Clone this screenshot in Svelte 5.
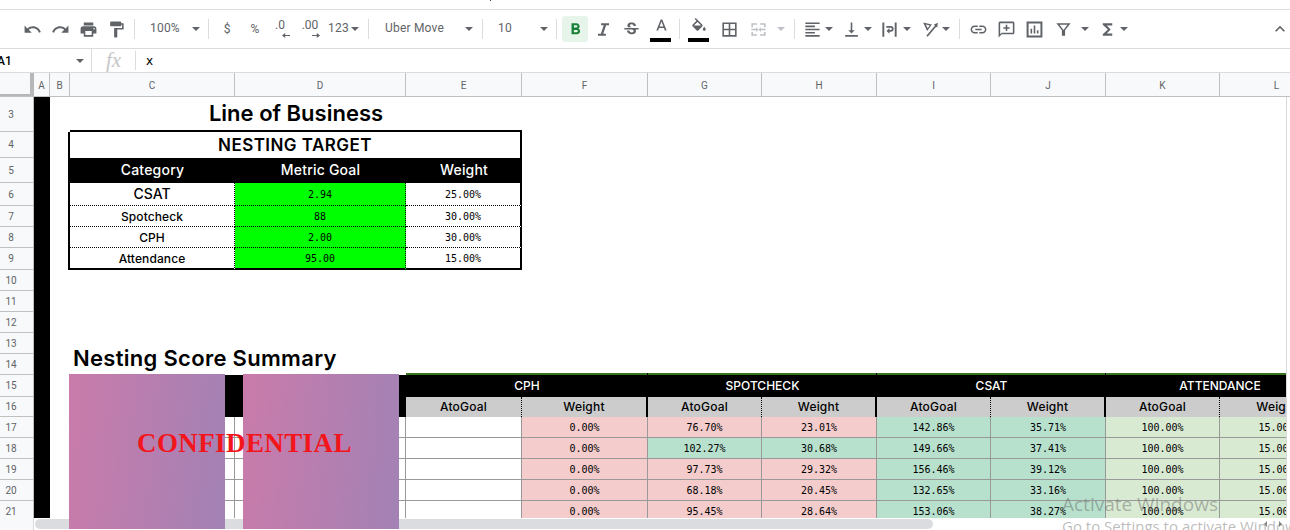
<script>
  const P = {
    undo: 'M12.5 8c-2.65 0-5.05.99-6.9 2.6L2 7v9h9l-3.62-3.62c1.39-1.16 3.16-1.88 5.12-1.88 3.54 0 6.55 2.31 7.6 5.5l2.37-.78C21.08 11.03 17.15 8 12.5 8z',
    redo: 'M18.4 10.6C16.55 8.99 14.15 8 11.5 8c-4.65 0-8.58 3.03-9.96 7.22L3.9 16c1.05-3.19 4.05-5.5 7.6-5.5 1.95 0 3.73.72 5.12 1.88L13 16h9V7l-3.6 3.6z',
    print: 'M19 8H5c-1.66 0-3 1.34-3 3v6h4v4h12v-4h4v-6c0-1.66-1.34-3-3-3zm-3 11H8v-5h8v5zm3-7c-.55 0-1-.45-1-1s.45-1 1-1 1 .45 1 1-.45 1-1 1zm-1-9H6v4h12V3z',
    paint: 'M18 4V3c0-.55-.45-1-1-1H5c-.55 0-1 .45-1 1v4c0 .55.45 1 1 1h12c.55 0 1-.45 1-1V6h1v4H9v11c0 .55.45 1 1 1h2c.55 0 1-.45 1-1v-9h8V4h-3z',
    bold: 'M15.6 10.79c.97-.67 1.65-1.77 1.65-2.79 0-2.26-1.75-4-4-4H7v14h7.04c2.09 0 3.71-1.7 3.71-3.79 0-1.52-.86-2.82-2.15-3.42zM10 6.5h3c.83 0 1.5.67 1.5 1.5s-.67 1.5-1.5 1.5h-3v-3zm3.5 9H10v-3h3.5c.83 0 1.5.67 1.5 1.5s-.67 1.5-1.5 1.5z',
    italic: 'M9 4v2.600h3.300L8.700 17.400H5V20h10v-2.600h-3.300l3.600-10.800H19V4z',
    strike: 'M7.240 8.750c-.26-.48-.39-1.030-.39-1.670 0-.61.13-1.160.4-1.670.26-.5.63-.93 1.110-1.290.48-.35 1.050-.63 1.700-.83.66-.19 1.390-.29 2.180-.29.81 0 1.540.11 2.210.34.66.22 1.230.54 1.690.94.47.4.83.88 1.080 1.430.25.55.38 1.150.38 1.810h-3.010c0-.31-.05-.59-.15-.85-.09-.27-.24-.49-.44-.68-.2-.19-.45-.33-.75-.44-.3-.1-.66-.16-1.060-.16-.39 0-.74.04-1.030.13-.29.09-.53.21-.72.36-.19.16-.34.34-.44.55-.1.21-.15.43-.15.66 0 .48.25.88.74 1.210.38.25.77.48 1.410.7H7.390c-.05-.08-.11-.17-.15-.25zM21 12v-2H3v2h9.620c.18.07.4.14.55.2.37.17.66.34.87.51.21.17.35.36.43.57.07.2.11.43.11.69 0 .23-.05.45-.14.66-.09.2-.23.38-.42.53-.19.15-.42.26-.71.35-.29.08-.63.13-1.010.13-.43 0-.83-.04-1.180-.13s-.66-.23-.91-.42c-.25-.19-.45-.44-.59-.75-.14-.31-.25-.76-.25-1.210H6.400c0 .55.08 1.130.24 1.580.16.45.37.85.65 1.210.28.35.6.66.98.92.37.26.78.48 1.220.65.44.17.9.3 1.380.39.48.08.96.13 1.440.13.8 0 1.530-.09 2.180-.28s1.210-.45 1.670-.79c.46-.34.82-.77 1.070-1.270s.38-1.070.38-1.710c0-.6-.1-1.140-.31-1.610-.05-.11-.11-.23-.17-.33H21z',
    grid: 'M3 3v18h18V3H3zm8 16H5v-6h6v6zm0-8H5V5h6v6zm8 8h-6v-6h6v6zm0-8h-6V5h6v6z',
    merge: 'M3 4h7v2H5v3H3V4zm11 0h7v5h-2V6h-5V4zM3 15h2v3h5v2H3v-5zm16 0h2v5h-7v-2h5v-3zM3 11h6V9l3 3-3 3v-2H3v-2zm18 0v2h-6v2l-3-3 3-3v2h6z',
    align: 'M15 15H3v2h12v-2zm0-8H3v2h12V7zM3 13h18v-2H3v2zm0 8h18v-2H3v2zM3 3v2h18V3H3z',
    valign: 'M16 13h-3V3h-2v10H8l4 4 4-4zM4 19v2h16v-2H4z',
    wrap: 'M3 3h2.400v18H3V3zm15.600 0H21v18h-2.400V3zM8 7.500h5.500a3.700 3.700 0 0 1 0 7.400H12v2.600l-3.800-3.700 3.800-3.700v2.600h1.500a1.400 1.400 0 0 0 0-2.900H8V7.500z',
    rotate: 'M4 3l11 2.600-6 8.400L4 3zm3.400 2.800l2.200 4.700 2.700-3.700-4.900-1zM8 20l11-13-1.800-1.100 5.300-2.400-.7 6-1.400-1L9.700 21.200 8 20z',
    link: 'M3.900 12c0-1.710 1.390-3.100 3.100-3.100h4V7H7c-2.760 0-5 2.240-5 5s2.240 5 5 5h4v-1.900H7c-1.710 0-3.100-1.390-3.100-3.100zM8 13h8v-2H8v2zm9-6h-4v1.900h4c1.710 0 3.100 1.390 3.100 3.100s-1.390 3.100-3.100 3.100h-4V17h4c2.760 0 5-2.240 5-5s-2.240-5-5-5z',
    comment: 'M20 2H4c-1.100 0-2 .9-2 2v18l4-4h14c1.100 0 2-.9 2-2V4c0-1.100-.9-2-2-2zm0 14H6l-2 2V4h16v12zM11 6h2v3h3v2h-3v3h-2v-3H8V9h3V6z',
    chart: 'M2 2h20v20H2V2zm2.500 2.500v15h15v-15h-15zM7 11h2v6H7v-6zm4-4h2v10h-2V7zm4 6h2v4h-2v-4z',
    filter: 'M3 4h18l-7 9v7h-4v-7L3 4zm4 2l5 6.500L17 6H7z',
    sigma: 'M18 4H6v2l6.500 6L6 18v2h12v-3h-7l5-5-5-5h7z',
    up: 'M7.410 15.410L12 10.830l4.590 4.580L18 14l-6-6-6 6z'
  };

  const tools = [
    { k: 'i', n: 'undo', w: 28 }, { k: 'i', n: 'redo', w: 28 }, { k: 'i', n: 'print', w: 28 }, { k: 'i', n: 'paint', w: 28 },
    { k: 's', ml: 4 },
    { k: 'pick', t: '100%', w: 73, pl: 15, pr: 8 },
    { k: 's' },
    { k: 't', t: '$', w: 36 }, { k: 't', t: '%', w: 20 },
    { k: 'dec', t: '.0', w: 30 }, { k: 'dec', t: '.00', w: 30, right: true },
    { k: 'pick', t: '123', w: 43, pl: 3, pr: 9 },
    { k: 's' },
    { k: 'pick', t: 'Uber Move', w: 113, pl: 16, pr: 9 },
    { k: 's' },
    { k: 'pick', t: '10', w: 73, pl: 15, pr: 8 },
    { k: 's' },
    { k: 'i', n: 'bold', w: 26, ml: 5, on: true },
    { k: 'i', n: 'italic', w: 30 }, { k: 'i', n: 'strike', w: 26 },
    { k: 'color', w: 34, letter: true },
    { k: 's', ml: 1 },
    { k: 'color', w: 38 },
    { k: 'i', n: 'grid', w: 22 },
    { k: 'i', n: 'merge', w: 36, off: true },
    { k: 'a', ml: 1, off: true },
    { k: 's', ml: 9 },
    { k: 'i', n: 'align', w: 26, ml: 4 }, { k: 'a' },
    { k: 'i', n: 'valign', w: 26, ml: 5 }, { k: 'a' },
    { k: 'i', n: 'wrap', w: 28, ml: 3 }, { k: 'a' },
    { k: 'i', n: 'rotate', w: 26, ml: 5 }, { k: 'a' },
    { k: 's', ml: 9 },
    { k: 'i', n: 'link', w: 36 }, { k: 'i', n: 'comment', w: 20 }, { k: 'i', n: 'chart', w: 36 }, { k: 'i', n: 'filter', w: 22 },
    { k: 'a', ml: 7 },
    { k: 'i', n: 'sigma', w: 26, ml: 5 }, { k: 'a' }
  ];

  const colLabels = 'ABCDEFGHIJKL'.split('');

  const n = (t, c = '', span = 1) => ({ t, c, span });
  const lead = (b = '') => [n('', 'blackcol'), n('', b)];
  const empty = () => [...lead(), n('', '', 10)];

  const target = [
    ['CSAT', '2.94', '25.00%', 'big'],
    ['Spotcheck', '88', '30.00%', ''],
    ['CPH', '2.00', '30.00%', ''],
    ['Attendance', '95.00', '15.00%', 'last']
  ];

  const rowsTarget = target.map(([a, b, c, m]) => [
    ...lead('edge'),
    n(a, `sans dotr ${m === 'big' ? 'big' : 'small'} ${m === 'last' ? 'btm' : 'dots'}`),
    n(b, `mono green ${m === 'last' ? 'btm' : 'dots'}`),
    n(c, `mono endcol ${m === 'last' ? 'btm' : 'dots'}`),
    n('', '', 7)
  ]);

  const P_ = 'pink', G_ = 'mint', L_ = 'pale';
  const score = [
    [[P_, '0.00%'], [P_, '76.70%'], [P_, '23.01%'], [G_, '142.86%'], [G_, '35.71%']],
    [[P_, '0.00%'], [G_, '102.27%'], [G_, '30.68%'], [G_, '149.66%'], [G_, '37.41%']],
    [[P_, '0.00%'], [P_, '97.73%'], [P_, '29.32%'], [G_, '156.46%'], [G_, '39.12%']],
    [[P_, '0.00%'], [P_, '68.18%'], [P_, '20.45%'], [G_, '132.65%'], [G_, '33.16%']],
    [[P_, '0.00%'], [P_, '95.45%'], [P_, '28.64%'], [G_, '153.06%'], [G_, '38.27%']]
  ];
  const rowsScore = score.map((r) => [
    ...lead(),
    n('', 'line'), n('', 'line'), n('', 'line'),
    ...r.map(([c, t]) => n(t, `mono line ${c}`)),
    n('100.00%', `mono line ${L_}`), n('15.00%', `mono line ${L_}`)
  ]);

  const sub = [];
  for (let i = 0; i < 4; i++) {
    sub.push(n('AtoGoal', 'sans sub dotr'));
    sub.push(n('Weight', `sans sub ${i < 3 ? 'thickr' : ''}`));
  }

  const sheet = [
    { h: 35, num: 3, cells: [...lead(), n('Line of Business', 'sans title btmk', 3), n('', '', 7)] },
    { h: 26, num: 4, cells: [...lead('edge'), n('NESTING TARGET', 'sans head endcol', 3), n('', '', 7)] },
    { h: 25, num: 5, cells: [...lead('edge'), n('Category', 'sans colh'), n('Metric Goal', 'sans colh'), n('Weight', 'sans colh'), n('', '', 7)] },
    { h: 23, num: 6, cells: rowsTarget[0] },
    { h: 21, num: 7, cells: rowsTarget[1] },
    { h: 21, num: 8, cells: rowsTarget[2] },
    { h: 22, num: 9, cells: rowsTarget[3] },
    { h: 21, num: 10, cells: empty() },
    { h: 21, num: 11, cells: empty() },
    { h: 21, num: 12, cells: empty() },
    { h: 21, num: 13, cells: empty() },
    { h: 21, num: 14, cells: [...lead(), n('Nesting Score Summary', 'sans summary', 2), n('', 'gline', 2), n('', 'gline', 2), n('', 'gline', 2), n('', 'gline', 2)] },
    { h: 22, num: 15, cells: [...lead('edgethin'), n('', 'inkfill', 2), n('CPH', 'sans band', 2), n('SPOTCHECK', 'sans band', 2), n('CSAT', 'sans band', 2), n('ATTENDANCE', 'sans band', 2)] },
    { h: 20, num: 16, cells: [...lead('edgethin'), n('', 'inkfill', 2), ...sub] },
    { h: 21, num: 17, cells: rowsScore[0] },
    { h: 21, num: 18, cells: rowsScore[1] },
    { h: 21, num: 19, cells: rowsScore[2] },
    { h: 21, num: 20, cells: rowsScore[3] },
    { h: 21, num: 21, cells: rowsScore[4] }
  ];
  const rowTemplate = sheet.map((r) => r.h + 'px').join(' ');
</script>

<div class="app">
  <div class="topline"><span class="tick"></span></div>

  <div class="toolbar">
    {#each tools as b}
      {#if b.k === 's'}
        <span class="sep" style:margin-left={b.ml ? b.ml + 'px' : null}></span>
      {:else if b.k === 'a'}
        <span class="arrow" class:off={b.off} style:margin-left={b.ml ? b.ml + 'px' : null}></span>
      {:else if b.k === 'i'}
        <span class="tool" class:on={b.on} class:off={b.off} style:width={b.w + 'px'} style:margin-left={b.ml ? b.ml + 'px' : null}>
          <svg viewBox="0 0 24 24" width="19" height="19"><path d={P[b.n]} /></svg>
        </span>
      {:else if b.k === 't'}
        <span class="tool txt" style:width={b.w + 'px'}>{b.t}</span>
      {:else if b.k === 'dec'}
        <span class="tool dec" style:width={b.w + 'px'}>
          <span>{b.t}</span>
          <svg viewBox="0 0 10 6" width="8" height="5">
            {#if b.right}<path d="M0 2.300h6V0l4 3-4 3V3.700H0z" />{:else}<path d="M10 2.300H4V0L0 3l4 3V3.700h6z" />{/if}
          </svg>
        </span>
      {:else if b.k === 'pick'}
        <span class="pick" style:width={b.w + 'px'} style:padding-left={b.pl + 'px'} style:padding-right={b.pr + 'px'}>
          <span>{b.t}</span><span class="arrow"></span>
        </span>
      {:else if b.k === 'color'}
        <span class="tool swatch" style:width={b.w + 'px'}>
          {#if b.letter}
            <svg viewBox="0 0 24 24" width="19" height="19"><path d="M11 3L5.500 17h2.250l1.120-3h6.250l1.120 3h2.250L13 3h-2zm-1.380 9L12 5.670 14.380 12H9.620z" /></svg>
          {:else}
            <svg viewBox="0 0 24 24" width="18" height="18"><path d="M16.560 8.940L7.620 0 6.210 1.410l2.380 2.380-5.150 5.150c-.59.59-.59 1.540 0 2.120l5.500 5.500c.29.29.68.44 1.060.44s.77-.15 1.060-.44l5.500-5.500c.59-.58.59-1.530 0-2.120zM5.210 10L10 5.210 14.790 10H5.210zM19 11.500s-2 2.170-2 3.500c0 1.100.9 2 2 2s2-.9 2-2c0-1.330-2-3.500-2-3.500z" /></svg>
          {/if}
          <i></i>
        </span>
      {/if}
    {/each}
    <span class="tool collapse"><svg viewBox="0 0 24 24" width="22" height="22"><path d={P.up} /></svg></span>
  </div>

  <div class="formula">
    <div class="namebox"><span>A1</span><span class="arrow"></span></div>
    <div class="fx">fx</div>
    <div class="value">x</div>
  </div>

  <div class="colhead">
    <div class="corner"></div>
    {#each colLabels as c}<div class="ch">{c}</div>{/each}
  </div>

  <div class="body">
    <div class="grid" style:grid-template-rows={rowTemplate}>
      {#each sheet as row}
        <div class="rn">{row.num}</div>
        {#each row.cells as cell}
          <div class="cell {cell.c}" class:s2={cell.span === 2} class:s3={cell.span === 3} class:s7={cell.span === 7} class:s10={cell.span === 10}>{cell.t}</div>
        {/each}
      {/each}
    </div>
  </div>

  <div class="scroll">
    <div class="scrollcorner"></div>
    <div class="thumb"></div>
    <div class="sarrows"><span class="al"></span><span class="ar"></span></div>
  </div>

  <div class="mask m1"></div>
  <div class="mask m2"></div>
  <div class="conf">CONFIDENTIAL</div>
  <div class="wm"><div>Activate Windows</div><div class="wm2">Go to Settings to activate Windows.</div></div>
</div>

<style>
  :global(body) { margin: 0; background: #fff; }
  .app {
    position: relative;
    width: 1290px;
    height: 530px;
    overflow: hidden;
    background: #fff;
    font-family: Roboto, "Liberation Sans", sans-serif;
    color: #000;
  }
  .topline { height: 9px; border-bottom: 1px solid #dadce0; display: flex; }
  .tick { width: 1px; height: 1px; margin-left: 490px; background: #444; }

  .toolbar {
    height: 38px;
    border-bottom: 1px solid #dadce0;
    display: flex;
    align-items: center;
    padding-left: 18px;
    color: #5f6368;
    fill: #5f6368;
    font-size: 12px;
  }
  .sep { width: 1px; height: 20px; background: #dadce0; flex: none; }
  .tool { display: flex; align-items: center; justify-content: center; height: 26px; flex: none; }
  .tool.on { background: #e6f4ea; border-radius: 3px; fill: #188038; }
  .tool.off { fill: #bdc1c6; }
  .tool.txt { font-size: 12px; }
  .tool.dec { flex-direction: column; font-size: 12px; line-height: 11px; }
  .tool.dec svg { margin: 2px 0 0 12px; }
  .tool.swatch { position: relative; }
  .tool.swatch svg { margin-top: -5px; }
  .tool.swatch i { position: absolute; left: 50%; margin-left: -11px; bottom: 0; width: 21px; height: 4px; background: #000; }
  .collapse { margin-left: auto; width: 20px; }
  .pick { display: flex; align-items: center; justify-content: space-between; flex: none; box-sizing: border-box; height: 26px; padding-bottom: 3px; letter-spacing: .2px; }
  .pick .arrow { margin-top: 3px; }
  .arrow { width: 0; height: 0; flex: none; border-left: 4px solid transparent; border-right: 4px solid transparent; border-top: 4px solid #5f6368; }
  .arrow.off { border-top-color: #bdc1c6; }

  .formula { height: 23px; border-bottom: 1px solid #dadce0; display: flex; align-items: center; font-size: 12px; }
  .namebox { width: 95px; height: 23px; margin-left: -3px; padding-right: 7px; box-sizing: border-box; display: flex; align-items: center; justify-content: space-between; border-right: 1px solid #dadce0; font-weight: 500; flex: none; }
  .fx { width: 44px; height: 19px; text-align: center; border-right: 1px solid #dadce0; font: italic 21px/19px "Liberation Serif", serif; color: #c4c7c5; flex: none; box-sizing: border-box; }
  .value { padding-left: 10px; font-family: "DejaVu Sans", sans-serif; }

  .colhead {
    display: grid;
    grid-template-columns: 34px 16px 20px 165px 171px 116px 126px 114px 115px 114px 115px 114px 114px;
    height: 23px;
    border-bottom: 1px solid #c0c0c0;
    background: #f8f9fa;
    font-size: 10px;
    color: #5f6368;
    width: 1290px;
    overflow: hidden;
  }
  .corner { background: #f8f9fa; border-right: 4px solid #b7b7b7; border-bottom: 3px solid #b7b7b7; box-sizing: border-box; height: 24px; width: 34px; }
  .ch { border-right: 1px solid #c0c0c0; display: flex; align-items: center; justify-content: center; box-sizing: border-box; }

  .body { height: 421px; overflow: hidden; width: 1286px; border-right: 1px solid #d9d9d9; }
  .grid {
    display: grid;
    grid-template-columns: 34px 16px 20px 165px 171px 116px 126px 114px 115px 114px 115px 114px 114px;
    width: 1334px;
  }
  .rn {
    background: #f8f9fa;
    border-bottom: 1px solid #c0c0c0;
    border-right: 1px solid #c0c0c0;
    box-sizing: border-box;
    color: #5f6368;
    font-size: 10px;
    display: flex;
    align-items: center;
    justify-content: center;
    padding-right: 11px;
  }
  .cell { box-sizing: border-box; min-width: 0; display: flex; align-items: center; justify-content: center; white-space: nowrap; overflow: visible; }
  .s2 { grid-column: span 2; }
  .s3 { grid-column: span 3; }
  .s7 { grid-column: span 7; }
  .s10 { grid-column: span 10; }

  .sans { font-family: Inter, Roboto, sans-serif; font-weight: 500; }
  .mono { font-family: "DejaVu Sans Mono", monospace; font-size: 10px; padding-top: 1px; }

  .blackcol { background: #000; }
  .edge { border-right: 2px solid #000; }
  .edgethin { border-right: 1px solid #000; }
  .title { font-size: 22px; font-weight: 600; padding-bottom: 2px; }
  .btmk { border-bottom: 2px solid #000; }
  .head { font-size: 17px; font-weight: 600; letter-spacing: .45px; }
  .endcol { border-right: 2px solid #000; }
  .colh { background: #000; color: #fff; font-size: 14px; letter-spacing: .2px; padding-bottom: 2px; }
  .big { font-size: 14px; padding-bottom: 2px; }
  .small { font-size: 12px; letter-spacing: .1px; }
  .dots { border-bottom: 1px dotted #000; }
  .dotr { border-right: 1px dotted #000; }
  .btm { border-bottom: 2px solid #000; }
  .green { background: #0f0; border-right: 1px dotted #000; }
  .summary { font-size: 22px; font-weight: 600; letter-spacing: .3px; justify-content: flex-start; padding-left: 3px; align-items: flex-end; line-height: 26px; height: 17px; }
  .gline {
    background:
      linear-gradient(#000, #000) right bottom / 1px 2px no-repeat,
      linear-gradient(#38761d, #38761d) left bottom / 100% 2px no-repeat;
  }
  .inkfill { background: #000; }
  .band { background: #000; color: #fff; font-size: 12px; padding-bottom: 1px; }
  .sub { background: #ccc; font-size: 12px; color: #000; letter-spacing: .2px; padding-bottom: 1px; }
  .thickr { border-right: 2px solid #000; }
  .line { border-right: 1px solid #999; border-bottom: 1px solid #999; }
  .pink { background: #f4cccc; }
  .mint { background: #b7e1cd; }
  .pale { background: #d9ead3; }

  .scroll { height: 12px; display: flex; position: relative; }
  .scrollcorner { width: 34px; background: #f8f9fa; flex: none; box-sizing: border-box; border-right: 1px solid #dadce0; }
  .thumb { width: 898px; height: 10px; margin: 1px 0 0 1px; background: #dadce0; border-radius: 5px; flex: none; }
  .sarrows { position: absolute; right: 8px; top: 3px; display: flex; gap: 12px; }
  .al, .ar { width: 0; height: 0; border-top: 3px solid transparent; border-bottom: 3px solid transparent; }
  .al { border-right: 3px solid #888; }
  .ar { border-left: 3px solid #888; }

  .mask { position: absolute; top: 374px; height: 155px; background: linear-gradient(95deg, #c97baa, #a382b5); }
  .m1 { left: 69px; width: 156px; }
  .m2 { left: 243px; width: 156px; }
  .conf { position: absolute; left: 137px; top: 427px; font: bold 27px/32px "Liberation Serif", serif; color: #f2161c; letter-spacing: .4px; white-space: nowrap; }
  .wm { position: absolute; left: 1062px; top: 492px; font-family: "Open Sans", sans-serif; color: rgba(90,90,90,.42); font-size: 19px; line-height: 24px; white-space: nowrap; }
  .wm2 { font-size: 15px; line-height: 20px; }
</style>
